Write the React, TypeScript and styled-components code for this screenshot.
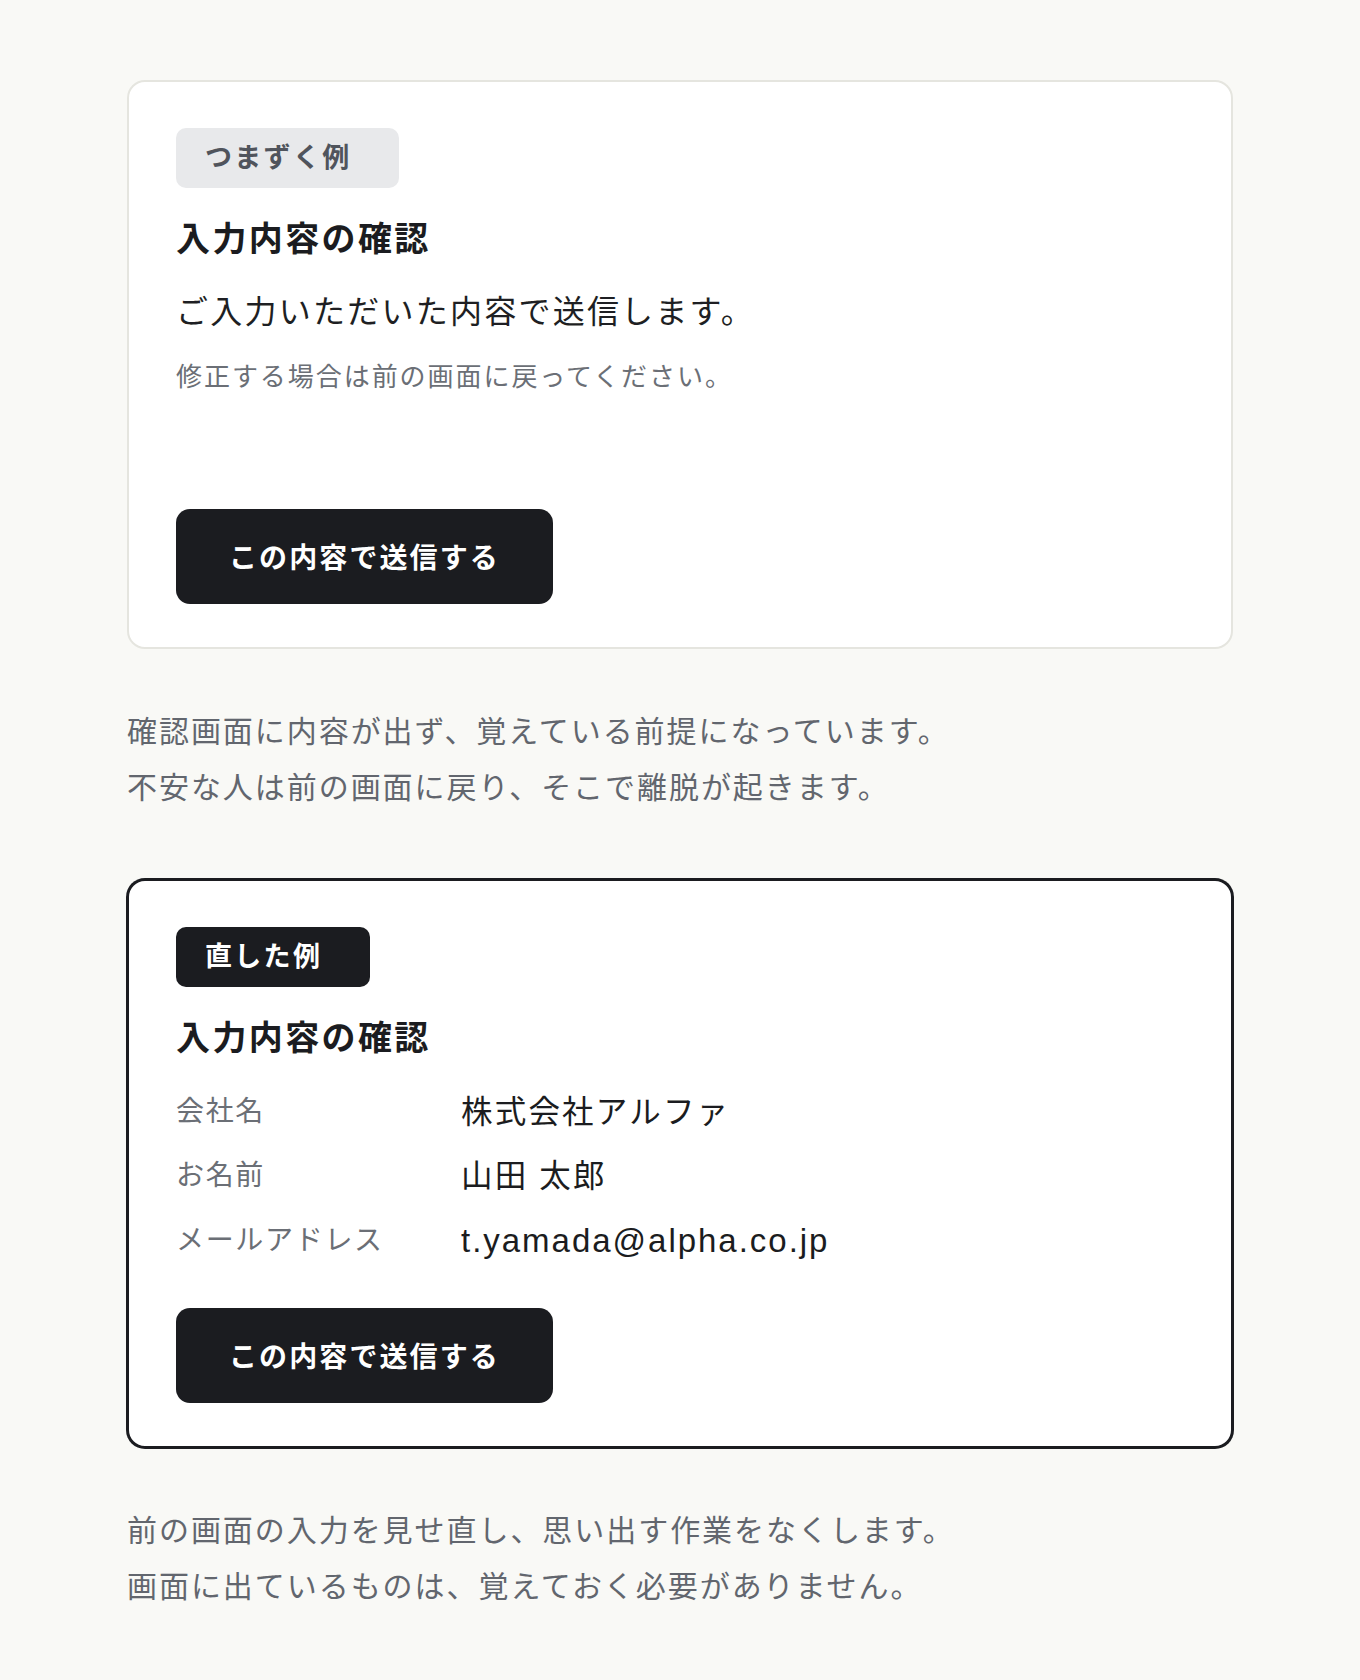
import React from 'react'
import styled, { createGlobalStyle, css } from 'styled-components'

const GlobalStyle = createGlobalStyle`
  html, body {
    margin: 0;
    padding: 0;
    background: #f9f9f6;
  }
  body {
    font-family: "Liberation Sans", "Noto Sans CJK JP", sans-serif;
    color: #1b1c20;
    -webkit-font-smoothing: antialiased;
  }
`

const Page = styled.main`
  width: 1106px;
  margin: 0 auto;
  padding: 80px 0 64px;
  display: flex;
  flex-direction: column;
  gap: 63px;
`

const Example = styled.section`
  display: flex;
  flex-direction: column;
`

const Card = styled.div<{ $fixed?: boolean }>`
  box-sizing: border-box;
  min-height: 569px;
  display: flex;
  flex-direction: column;
  align-items: flex-start;
  padding: 46px 47px 43px;
  background: #fff;
  border-radius: 18px;
  border: 2px solid #e5e5df;

  ${p => p.$fixed && css`
    border-color: #1b1c20;
    box-shadow: 0 0 0 1px #1b1c20;
  `}
`

const Tag = styled.span<{ $dark?: boolean }>`
  box-sizing: border-box;
  display: inline-flex;
  align-items: center;
  height: 60px;
  padding: 0 48px 6px 29px;
  border-radius: 10px;
  font-size: 27px;
  font-weight: 600;
  letter-spacing: 0.085em;
  background: ${p => (p.$dark ? '#1b1c20' : '#e8e9eb')};
  color: ${p => (p.$dark ? '#fff' : '#50545c')};
`

const Title = styled.h3`
  margin: 26.5px 0 0;
  font-size: 34px;
  line-height: 48px;
  font-weight: 700;
  letter-spacing: 0.07em;
  color: #1b1c20;
`

const Lead = styled.p`
  margin: 25.5px 0 0;
  font-size: 32px;
  line-height: 48px;
  letter-spacing: 0.07em;
  color: #1e1f23;
`

const Hint = styled.p`
  margin: 21px 0 0;
  font-size: 26px;
  line-height: 40px;
  letter-spacing: 0.075em;
  color: #6b6f76;
`

const Details = styled.dl`
  margin: 26px 0 0;
  display: grid;
  grid-template-columns: 285px 1fr;
  row-gap: 16.5px;
  align-items: center;
`

const Term = styled.dt`
  font-size: 28px;
  line-height: 48px;
  letter-spacing: 0.06em;
  color: #6b6f76;
`

const Value = styled.dd<{ $latin?: boolean }>`
  margin: 0;
  font-size: ${p => (p.$latin ? '33px' : '31.5px')};
  line-height: 48px;
  letter-spacing: ${p => (p.$latin ? '0.06em' : '0.07em')};
  color: #1b1c20;
`

const Actions = styled.div`
  margin-top: auto;
  padding-top: 43px;
`

const SubmitButton = styled.button`
  box-sizing: border-box;
  height: 95px;
  padding: 0 53px 2px;
  border: none;
  border-radius: 14px;
  background: #1b1c20;
  color: #fff;
  font-family: inherit;
  font-size: 28px;
  font-weight: 700;
  letter-spacing: 0.075em;
  cursor: pointer;
`

const Note = styled.p`
  margin: 55px 0 0;
  font-size: 30px;
  line-height: 56px;
  letter-spacing: 0.065em;
  color: #62666e;
`

const entries = [
  { label: '会社名', value: '株式会社アルファ' },
  { label: 'お名前', value: '山田 太郎' },
  { label: 'メールアドレス', value: 't.yamada@alpha.co.jp', latin: true },
]

export default function App() {
  return (
    <>
      <GlobalStyle />
      <Page>
        <Example>
          <Card>
            <Tag>つまずく例</Tag>
            <Title>入力内容の確認</Title>
            <Lead>ご入力いただいた内容で送信します。</Lead>
            <Hint>修正する場合は前の画面に戻ってください。</Hint>
            <Actions>
              <SubmitButton>この内容で送信する</SubmitButton>
            </Actions>
          </Card>
          <Note>
            確認画面に内容が出ず、覚えている前提になっています。
            <br />
            不安な人は前の画面に戻り、そこで離脱が起きます。
          </Note>
        </Example>

        <Example>
          <Card $fixed>
            <Tag $dark>直した例</Tag>
            <Title>入力内容の確認</Title>
            <Details>
              {entries.map(e => (
                <React.Fragment key={e.label}>
                  <Term>{e.label}</Term>
                  <Value $latin={e.latin}>{e.value}</Value>
                </React.Fragment>
              ))}
            </Details>
            <Actions>
              <SubmitButton>この内容で送信する</SubmitButton>
            </Actions>
          </Card>
          <Note>
            前の画面の入力を見せ直し、思い出す作業をなくします。
            <br />
            画面に出ているものは、覚えておく必要がありません。
          </Note>
        </Example>
      </Page>
    </>
  )
}
